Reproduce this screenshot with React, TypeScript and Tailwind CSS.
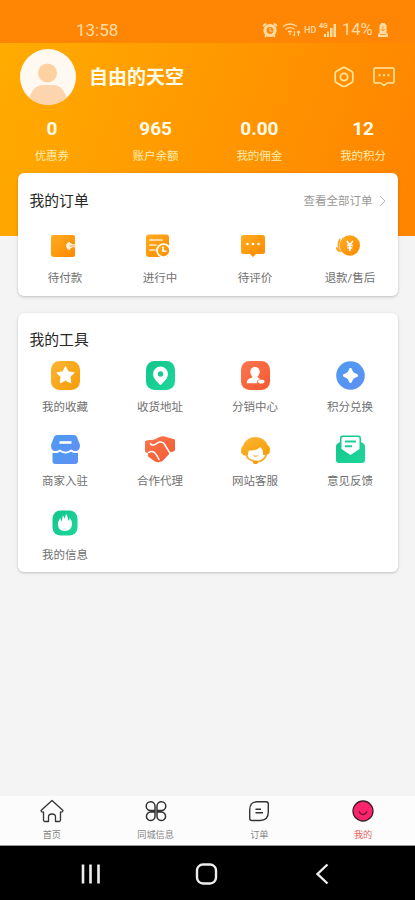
import type { ReactNode } from "react";

interface Entry {
  label: string;
  icon: ReactNode;
}

const stats = [
  { value: "0", label: "优惠券" },
  { value: "965", label: "账户余额" },
  { value: "0.00", label: "我的佣金" },
  { value: "12", label: "我的积分" },
];

const orders: Entry[] = [
  {
    label: "待付款",
    icon: (
      <svg className="mr-[4px]" width="24" height="24" viewBox="0 0 24 24">
        <path
          d="M2 1h20a2 2 0 0 1 2 2v5h-4.500a4 4 0 0 0 0 8H24v5a2 2 0 0 1-2 2H3a3 3 0 0 1-3-3V3a2 2 0 0 1 2-2z"
          fill="url(#orange)"
        />
        <path d="M24 8h-5v8h5z" fill="#fd9308" />
        <circle cx="18.300" cy="11.800" r="3" fill="#fff3df" />
        <path d="M18 10.300h6v3h-6z" fill="#fff3df" />
        <path d="M18.500 11.300H24v1.200h-5.500z" fill="#ffb34a" />
      </svg>
    ),
  },
  {
    label: "进行中",
    icon: (
      <svg className="mr-[3px]" width="25" height="24" viewBox="0 0 25 24">
        <rect y="0.500" width="23" height="22.500" rx="3" fill="url(#orange)" />
        <path
          d="M4 6h12M4 11h6M4 16h5"
          stroke="#ffecd0"
          strokeWidth="1.700"
          strokeLinecap="round"
        />
        <circle cx="17.500" cy="16.500" r="6.500" fill="url(#orange)" stroke="#fff" strokeWidth="1.700" />
        <path d="M17 12.800v4.400h3.500" fill="none" stroke="#fff" strokeWidth="1.600" />
      </svg>
    ),
  },
  {
    label: "待评价",
    icon: (
      <svg className="mr-[4px]" width="24" height="24" viewBox="0 0 24 24">
        <path
          d="M2.500 1h19A2.500 2.500 0 0 1 24 3.500v14a2.500 2.500 0 0 1-2.500 2.500H15l-3 3-3-3H2.500A2.500 2.500 0 0 1 0 17.500v-14A2.500 2.500 0 0 1 2.500 1z"
          fill="url(#orange)"
        />
        <circle cx="6.500" cy="10" r="1.300" fill="#fff" />
        <circle cx="12" cy="10" r="1.300" fill="#fff" />
        <circle cx="17.500" cy="10" r="1.300" fill="#fff" />
      </svg>
    ),
  },
  {
    label: "退款/售后",
    icon: (
      <svg className="mr-[4px]" width="24" height="24" viewBox="0 0 24 24">
        <circle cx="13.800" cy="11.500" r="10.200" fill="url(#orange)" />
        <path
          d="M4 5Q1.500 10 3 16.500M0 13.500l2.500 3.500H6"
          fill="none"
          stroke="#ffa51a"
          strokeWidth="1.700"
        />
        <path
          d="M10.800 7l3 4 3-4M10.800 11.500h6M11.300 14h5M13.800 11v6"
          fill="none"
          stroke="#fff"
          strokeWidth="1.700"
        />
      </svg>
    ),
  },
];

const tools: Entry[] = [
  {
    label: "我的收藏",
    icon: (
      <svg width="29" height="29" viewBox="0 0 29 29">
        <rect width="29" height="29" rx="8.500" fill="url(#yellow)" />
        <path
          d="M14.500 5.500l2.700 5.300 5.900 1-4.200 4.200.9 5.900-5.300-2.700-5.300 2.700.9-5.900-4.200-4.200 5.900-1z"
          fill="#fff"
          stroke="#fff"
          strokeWidth="1"
          strokeLinejoin="round"
        />
      </svg>
    ),
  },
  {
    label: "收货地址",
    icon: (
      <svg width="29" height="29" viewBox="0 0 29 29">
        <rect width="29" height="29" rx="8.500" fill="url(#green)" />
        <path
          d="M14.500 5.500a7.500 7.500 0 0 0-7.500 7.500c0 4.500 4 7.500 6.300 10.200q1.200 1.100 2.400 0C18 20.500 22 17.500 22 13a7.500 7.500 0 0 0-7.500-7.500z"
          fill="#fff"
        />
        <circle cx="14.500" cy="13" r="2.700" fill="#16ca91" />
      </svg>
    ),
  },
  {
    label: "分销中心",
    icon: (
      <svg width="29" height="29" viewBox="0 0 29 29">
        <rect width="29" height="29" rx="8.500" fill="url(#red)" />
        <path
          d="M14 5.800a4.800 4.800 0 0 0-4.700 5c0 2.200.9 3.800 2.200 4.800-.2 1.200-1.700 1.500-3 2-2 .9-2.700 2-2.700 4.600h10.500c-1-2 .7-3.900 3-4-1-1-2.600-1.200-2.900-2.600 1.400-1 2.300-2.600 2.300-4.800a4.800 4.800 0 0 0-4.700-5z"
          fill="#fff"
        />
        <rect x="17" y="18.800" width="6.500" height="3.600" rx="1.800" fill="#fff" />
      </svg>
    ),
  },
  {
    label: "积分兑换",
    icon: (
      <svg width="29" height="29" viewBox="0 0 29 29">
        <circle cx="14.500" cy="14.500" r="14.300" fill="url(#blue)" />
        <path
          d="M14.500 8.500Q15.500 13 20.500 14.500 15.500 16 14.500 20.500 13.500 16 8.500 14.500 13.500 13 14.500 8.500z"
          fill="#fff"
          stroke="#fff"
          strokeWidth="3"
          strokeLinejoin="round"
        />
      </svg>
    ),
  },
  {
    label: "商家入驻",
    icon: (
      <svg width="29" height="29" viewBox="0 0 29 29">
        <path
          d="M6 0h17q2 0 3 2l3 8q0 6-4.500 6-2.500 0-4.500-1.500Q17.500 17 14.500 17T9 14.500Q7 16 4.500 16 0 16 0 10l3-8Q4 0 6 0z"
          fill="url(#blue)"
        />
        <path
          d="M1.500 17.500q4 1.500 7.500-1 5.500 4 11 0 3.500 2.500 7 1V26q0 3-3 3H4.500q-3 0-3-3z"
          fill="url(#blue)"
        />
        <path
          d="M1.500 17.200q4 .8 7.500-1.700 5.500 4 11 0 3.500 2.500 7 1.700"
          fill="none"
          stroke="#fff"
          strokeWidth="1.400"
        />
        <path d="M8.500 7.500h12" stroke="#fff" strokeWidth="2.600" />
      </svg>
    ),
  },
  {
    label: "合作代理",
    icon: (
      <svg width="30" height="29" viewBox="0 0 30 29">
        <path
          d="M1 5.500Q0 6 0 7v9q0 1 1 1.500l2 .5q-.5 2 0 3.500l7 5q4 1.500 7.500-.5l8.500-9 3-.8q1-.5 1-1.700V5.500Q30 4 28.500 4L22 2.200Q18 .5 14.500 2L9.500 4.500z"
          fill="url(#red)"
        />
        <path
          d="M5.500 8.500Q6 10.500 8.500 10q3-1 5-2.800 3.500-1 5.500 1.300L25.500 19"
          fill="none"
          stroke="#fff"
          strokeWidth="1.500"
          strokeLinecap="round"
        />
        <path
          d="M3.500 17.500q3.500-2 6 0 2.500 2.500 4.500 7"
          fill="none"
          stroke="#fff"
          strokeWidth="1.500"
          strokeLinecap="round"
        />
      </svg>
    ),
  },
  {
    label: "网站客服",
    icon: (
      <svg width="29" height="29" viewBox="0 0 29 29">
        <path
          d="M3 10.500a12 10.500 0 0 1 23 0"
          fill="none"
          stroke="#fcb136"
          strokeWidth="1.800"
        />
        <path
          d="M3.500 10a11.300 8.500 0 0 1 22 0q3.500.5 3.500 5t-4 5h-3q.3-3-1-6.500-.8 1-1.500-1.500-4 4-11.500 3.500-1.200 2-1 5H4q-4-.5-4-5t3.500-5.500z"
          fill="url(#yellow)"
        />
        <path
          d="M5 20q2 5 8 6M25.500 19q-2 7.500-11.500 8.300"
          fill="none"
          stroke="#fbaa28"
          strokeWidth="1.800"
        />
        <path d="M11.500 20.500q3 2.500 6 0z" fill="#fbaa28" />
        <rect x="12" y="25.500" width="5" height="3.500" rx="1.700" fill="#f79a10" />
      </svg>
    ),
  },
  {
    label: "意见反馈",
    icon: (
      <svg width="29" height="29" viewBox="0 0 29 29">
        <path
          d="M6 .5h17Q25 .5 25 3v4l2.500 1.500Q29 9.500 29 11v14q0 3-3 3H3q-3 0-3-3V11q0-1.500 1.500-2.500L4 7V3Q4 .5 6 .5z"
          fill="url(#green)"
        />
        <path d="M5.500 3.500Q5.500 2 7 2h15q1.500 0 1.500 1.500V14l-9 6-9-6z" fill="#fff" />
        <path d="M9 6.500h11M9 11.300h7" stroke="#20cf98" strokeWidth="1.900" />
      </svg>
    ),
  },
  {
    label: "我的信息",
    icon: (
      <svg width="26" height="26" viewBox="0 0 26 26">
        <rect x="0.500" y="0.500" width="25" height="25" rx="8" fill="url(#green)" />
        <path
          d="M14 4q1 .2 1.700 3.500.3 1.500 1 3.500 1-1 .8-3 3 3 2.500 6.500Q19.500 21 13 21t-7-6q-.3-4 2.700-7-.2 2 .8 3.500Q10.500 9 10.800 5.500 12 6 12.500 9z"
          fill="#fff"
        />
      </svg>
    ),
  },
];

const tabs: Entry[] = [
  {
    label: "首页",
    icon: (
      <svg width="24" height="24" viewBox="0 0 24 24" fill="none" stroke="#333" strokeWidth="1.300" strokeLinejoin="round">
        <path d="M12 1.500 1 11.500q0 1.800 2.500 1.500v8q0 1.500 1.500 1.500h3.500V18q0-3 3.500-3t3.500 3v4.500H19q1.500 0 1.500-1.500v-8q2.500.3 2.500-1.500z" />
      </svg>
    ),
  },
  {
    label: "同城信息",
    icon: (
      <svg width="24" height="24" viewBox="0 0 24 24" fill="none" stroke="#333" strokeWidth="1.500">
        <path d="M11 7v4.500H6.500A4.400 4.400 0 1 1 11 7zM13 7v4.500h4.500A4.400 4.400 0 1 0 13 7zM11 17v-4H6.500A4.300 4.300 0 1 0 11 17zM13 17v-4h4.500A4.300 4.300 0 1 1 13 17z" />
      </svg>
    ),
  },
  {
    label: "订单",
    icon: (
      <svg width="24" height="24" viewBox="0 0 24 24" fill="none" stroke="#333" strokeWidth="1.400">
        <path d="M10 2.800h9Q21.300 2.800 21.300 5v8q0 8.500-8.300 8.500H5q-2.300 0-2.300-2.300V11Q2.700 2.800 10 2.800z" />
        <path d="M8.500 10.200h5.500M8.500 13.800h7.500" />
      </svg>
    ),
  },
  {
    label: "我的",
    icon: (
      <svg width="24" height="24" viewBox="0 0 24 24" fill="none">
        <circle cx="12" cy="12" r="10" fill="#fb246d" stroke="#3f1c2a" strokeWidth="1.300" />
        <path d="M8 12.500q1.500 3 4 3t4-3" stroke="#7a1238" strokeWidth="1.500" />
      </svg>
    ),
  },
];

function Gradients() {
  return (
    <svg width="0" height="0" className="absolute">
      <defs>
        <linearGradient id="orange" x1="0" y1="0" x2="1" y2="1">
          <stop stopColor="#ffac20" />
          <stop offset="1" stopColor="#fd8900" />
        </linearGradient>
        <linearGradient id="yellow" x1="0" y1="0" x2="1" y2="1">
          <stop stopColor="#fdb532" />
          <stop offset="1" stopColor="#f69c08" />
        </linearGradient>
        <linearGradient id="green" x1="0" y1="0" x2="1" y2="1">
          <stop stopColor="#12c48b" />
          <stop offset="1" stopColor="#1ed79b" />
        </linearGradient>
        <linearGradient id="red" x1="0" y1="0" x2="1" y2="1">
          <stop stopColor="#fb7650" />
          <stop offset="1" stopColor="#f5592e" />
        </linearGradient>
        <linearGradient id="blue" x1="0" y1="0" x2="1" y2="1">
          <stop stopColor="#4d9bee" />
          <stop offset="1" stopColor="#5f90f6" />
        </linearGradient>
      </defs>
    </svg>
  );
}

function StatusBar() {
  return (
    <div className="flex h-[43px] items-end bg-[#ff8604] pr-[27px] pb-[3px] pl-[76px] font-[Roboto] text-[#ffdca4]">
      <span className="text-[17px] leading-[20px]">13:58</span>
      <div className="ml-auto flex h-5 items-center">
        <svg width="16" height="16" viewBox="0 0 16 16" fill="none" stroke="currentColor">
          <circle cx="8" cy="8.500" r="5" strokeWidth="3.200" />
          <path d="M1 4l3-2.500M15 4l-3-2.500M3 15l1.500-2M13 15l-1.500-2" strokeWidth="1.800" />
          <path d="M8 6v3h2.500" strokeWidth="1.200" />
        </svg>
        <svg className="ml-[4px]" width="19" height="16" viewBox="0 0 19 16" fill="none" stroke="currentColor">
          <path d="M1 4.500q7-5 14 0M3.500 7.300q4.500-3.300 9 0M6 10q2-1.500 4 0" strokeWidth="1.300" />
          <path d="M8 10.500v2.500M12.500 9v5M11 12.500l1.500 1.500M16.500 14V9M15 10.500 16.500 9l1.500 1.500" strokeWidth="1.200" />
        </svg>
        <span className="ml-[3px] w-[14px] text-[9px] leading-4 font-medium">HD</span>
        <div className="relative ml-[1px] h-4 w-[18px]">
          <svg width="18" height="16" viewBox="0 0 18 16" fill="currentColor">
            <path d="M5 12h2v3H5zM8 9.500h2V15H8zM11 6h2.500v9H11zM14.500 2H17v13h-2.500z" />
          </svg>
          <span className="absolute top-0 left-0 text-[7px] leading-[8px] font-bold">4G</span>
        </div>
        <span className="ml-[5px] w-[32px] text-[16.500px] leading-5">14%</span>
        <svg className="ml-[4px]" width="10" height="14" viewBox="0 0 10 14" fill="currentColor">
          <path d="M3 0h4v1.500h1.500v9H10V14H0v-3.500h1.500v-9H3z" />
          <path d="M5 3v5M3 6l2 2 2-2M2 11.500h6" fill="none" stroke="#ff9a2c" strokeWidth="1" />
        </svg>
      </div>
    </div>
  );
}

function Profile() {
  return (
    <div className="flex h-[73px] pt-[6px] pr-[20px] pl-[20px]">
      <svg width="56" height="56" viewBox="0 0 56 56">
        <clipPath id="avatar">
          <circle cx="28" cy="28" r="28" />
        </clipPath>
        <g clipPath="url(#avatar)">
          <rect width="56" height="56" fill="#fff9f1" />
          <circle cx="27.500" cy="24" r="9.500" fill="#fdd2a0" />
          <path d="M9 50q4-14 14-14h10q10 0 14 14v6H9z" fill="#fcd4ad" />
        </g>
      </svg>
      <h1 className="ml-[13px] pt-[1px] text-[19px] leading-[56px] font-bold text-[#fffbe8]">
        自由的天空
      </h1>
      <div className="ml-auto flex h-[56px] items-center gap-[18px] text-[#ffe7a0]">
        <svg width="22" height="22" viewBox="0 0 22 22" fill="none" stroke="currentColor" strokeWidth="1.700" strokeLinejoin="round">
          <path d="M9.700 1.800q1.300-.7 2.600 0l6.200 3.500q1.300.7 1.300 2.200v7q0 1.500-1.300 2.200l-6.200 3.500q-1.300.7-2.600 0l-6.200-3.500Q2.200 16 2.200 14.500v-7q0-1.500 1.300-2.200z" />
          <circle cx="11" cy="11" r="3.600" />
        </svg>
        <svg width="22" height="22" viewBox="0 0 22 22" fill="none" stroke="currentColor" strokeWidth="1.600" strokeLinejoin="round">
          <path d="M2.500 2h17q1.500 0 1.500 1.500v12q0 1.500-1.500 1.500H14l-3 2.500L8 17H2.500Q1 17 1 15.500v-12Q1 2 2.500 2z" />
          <path d="M5.500 9.300h2M10 9.300h2M14.500 9.300h2" strokeWidth="2" />
        </svg>
      </div>
    </div>
  );
}

function EntryGrid({ items, rowClass }: { items: Entry[]; rowClass: string }) {
  return (
    <div className="grid grid-cols-4">
      {items.map((item) => (
        <div key={item.label} className={`flex flex-col items-center ${rowClass}`}>
          <div className="flex h-[30px] items-center">{item.icon}</div>
          <span className="text-[11.500px] leading-4 whitespace-nowrap text-[#707070]">
            {item.label}
          </span>
        </div>
      ))}
    </div>
  );
}

export default function App() {
  return (
    <div className="flex h-[900px] w-[415px] flex-col overflow-hidden bg-[#f4f4f4] font-['Roboto','Noto_Sans_CJK_SC',sans-serif]">
      <Gradients />
      <header className="h-[236px] shrink-0 bg-[linear-gradient(110deg,#ffad00_0%,#ff9800_50%,#ff8500_95%)]">
        <StatusBar />
        <Profile />
        <div className="grid grid-cols-4 text-center">
          {stats.map((stat) => (
            <div key={stat.label} className="pt-[2px]">
              <div className="text-[19px] leading-[22px] font-bold text-[#fffbe8]">
                {stat.value}
              </div>
              <div className="mt-[8px] text-[11.500px] leading-4 text-[#ffedb0]">{stat.label}</div>
            </div>
          ))}
        </div>
      </header>

      <main className="mx-auto -mt-[63px] flex w-[380px] flex-1 flex-col gap-[17px]">
        <section className="h-[123px] rounded-md bg-white shadow-[0_1px_3px_rgba(0,0,0,0.22)]">
          <div className="flex h-[58px] items-center justify-between pr-[11px] pl-[12px]">
            <h2 className="pb-[3px] text-[14.800px] leading-5 text-[#262626]">我的订单</h2>
            <div className="flex items-center gap-[5px] pb-[3px] text-[11.500px] leading-5 text-[#999]">
              查看全部订单
              <svg width="9" height="12" viewBox="0 0 9 12" fill="none" stroke="#bbb">
                <path d="M2 1l5 5-5 5" />
              </svg>
            </div>
          </div>
          <EntryGrid items={orders} rowClass="gap-[9px]" />
        </section>

        <section className="h-[259px] rounded-md bg-white shadow-[0_1px_3px_rgba(0,0,0,0.22)]">
          <h2 className="h-[47px] pt-[17px] pl-[12px] text-[14.800px] leading-5 text-[#262626]">
            我的工具
          </h2>
          <EntryGrid items={tools} rowClass="h-[74px] gap-[9px]" />
        </section>
      </main>

      <nav className="grid h-[50px] shrink-0 grid-cols-4 border-b border-[#999] bg-[#fcfcfc]">
        {tabs.map((tab) => (
          <div key={tab.label} className="flex flex-col items-center pt-[3px]">
            {tab.icon}
            <span
              className={`mt-[6px] text-[9.200px] leading-3 ${
                tab.label === "我的" ? "text-[#e2685e]" : "text-[#888]"
              }`}
            >
              {tab.label}
            </span>
          </div>
        ))}
      </nav>

      <div className="flex h-[54px] shrink-0 items-center justify-between bg-black pt-[1px] pr-[83px] pl-[80px] text-[#eee]">
        <svg width="22" height="22" viewBox="0 0 22 22" stroke="currentColor" strokeWidth="2.600">
          <path d="M3 1.500v19M10.500 1.500v19M18.500 1.500v19" />
        </svg>
        <svg width="24" height="24" viewBox="0 0 24 24" fill="none" stroke="currentColor" strokeWidth="2.400">
          <rect x="2" y="2.500" width="19" height="19" rx="6" />
        </svg>
        <svg width="20" height="22" viewBox="0 0 20 22" fill="none" stroke="currentColor" strokeWidth="2.400">
          <path d="M15.500 1.500 5.500 11l10 9.500" />
        </svg>
      </div>
    </div>
  );
}
